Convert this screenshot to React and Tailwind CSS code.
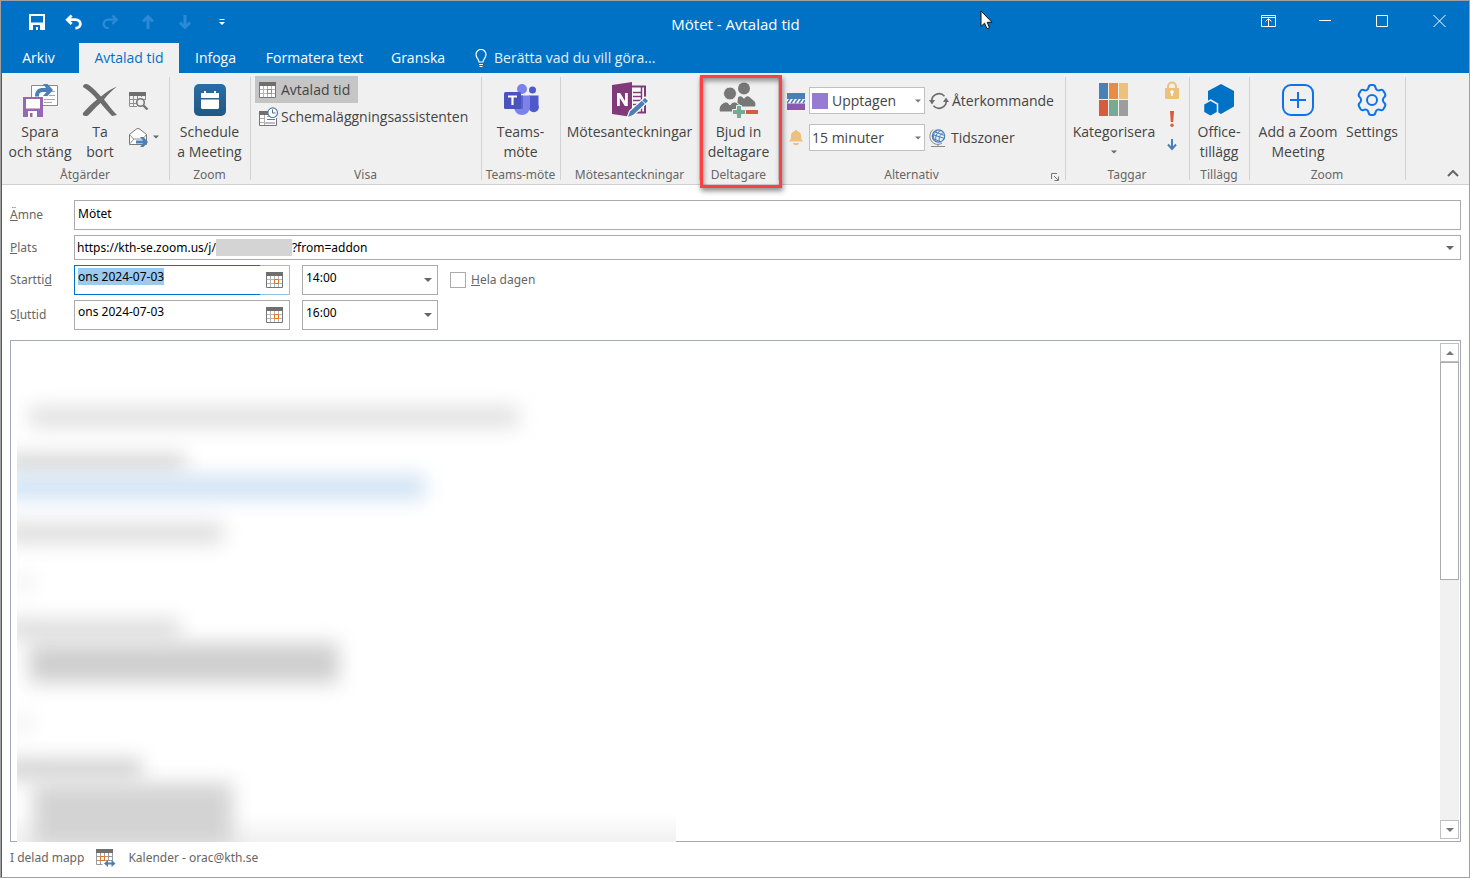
import React, { useState } from "react";

const CaretDown = ({ className = "" }) => (
  <svg width="8" height="4" viewBox="0 0 8 4" className={className}>
    <path d="M0 0h8L4 4z" fill="currentColor" />
  </svg>
);

const CalendarIcon = () => (
  <svg width="18" height="18" viewBox="0 0 18 18" fill="none">
    <path d="M0 4h17v13H0z" fill="#fff" />
    <path d="M1 8.500h15M1 12.500h15M4.500 5v11M8.500 5v11M12.500 5v11" stroke="#b5b5b5" />
    <path d="M.5 4v12.500h16V4" stroke="#777" />
    <path d="M0 1h17v4H0z" fill="#6f6f6f" />
    <path d="M8.500 8.500h4v4h-4z" fill="#fff" stroke="#e0731d" />
  </svg>
);

const SaveCloseIcon = () => (
  <svg width="36" height="36" viewBox="0 0 36 36" fill="none">
    <path d="M9.500 3.500h26v20h-26z" fill="#fff" stroke="#8a8a8a" />
    <path d="M29 9.500h4M27 13.500h6M22 17.500h11M22 20.500h8" stroke="#a6a6a6" />
    <path d="M13 14.500c0-6 3-8.500 8-8.500h3l-3-4h4.500l5.500 6-5.500 6H21l3.500-4h-3C18 10 17 11 17 14.500z" fill="#4a7fb8" />
    <path d="M1 15h20v20H1z" fill="#9567b5" />
    <path d="M4 17h14v9.500H4z" fill="#fff" />
    <path d="M6 29h9v6H6z" fill="#fff" />
    <path d="M8 31h2.500v4H8z" fill="#9567b5" />
  </svg>
);

const DeleteIcon = () => (
  <svg width="36" height="34" viewBox="0 0 36 34">
    <path
      d="M1 4C1 1 4 0 7 2c5 3.500 8 7.500 12 11.500C24 9 29 6 35 3.500c-5 4-9.500 8-13 13C26 21.500 30 27 35 32l-5 1c-4-4-8-9-11.500-13C14 24 10 28.500 6 32.500c-3 1.500-6 0-5-2.500 4.500-5.500 9-9.500 14-13.500C11 11.500 6 7 1 4z"
      fill="#6d6d6d"
    />
  </svg>
);

const CalendarSearchIcon = () => (
  <svg width="20" height="20" viewBox="0 0 20 20" fill="none">
    <path d="M.5 5v11.500H8M1 9.500h16M1 13.500h7M4.500 5v11M8.500 5v11M12.500 5v2M16.500 5v5" stroke="#8f8f8f" />
    <path d="M0 2h17v4H0z" fill="#6f6f6f" />
    <circle cx="11.500" cy="12.500" r="3.800" fill="#f0f0f0" stroke="#777" strokeWidth="1.600" />
    <path d="M14.500 15.500l4 4" stroke="#777" strokeWidth="2.400" />
  </svg>
);

const ForwardIcon = () => (
  <svg width="20" height="20" viewBox="0 0 20 20" fill="none">
    <path d="M.5 7.500L7 2.300c1.300-1 2.700-1 4 0l6.500 5.200v10H.5z" fill="#fff" stroke="#777" />
    <path d="M.5 7.500l4 4.500h9l4-4.500M.5 17L5 12" stroke="#8f8f8f" />
    <path d="M7 13.500h7l-3-3.500h3.500l4.500 5-4.500 5H11l3-3.500H7z" fill="#4a7fb8" />
  </svg>
);

const ZoomCalendarIcon = () => (
  <svg width="32" height="32" viewBox="0 0 32 32">
    <defs>
      <linearGradient id="zoomBlue" x1="0" y1="0" x2="0" y2="1">
        <stop offset="0" stopColor="#2b6da5" />
        <stop offset="1" stopColor="#205882" />
      </linearGradient>
    </defs>
    <rect width="32" height="32" rx="5" fill="url(#zoomBlue)" />
    <path d="M7 9h3V7h2v2h8V7h2v2h3v5H7zM7 15.500h18v8q0 1.500-1.500 1.500h-15Q7 25 7 23.500z" fill="#fff" />
  </svg>
);

const SchedulingIcon = () => (
  <svg width="20" height="20" viewBox="0 0 20 20" fill="none">
    <path d="M.5 5v13.500h17V11" fill="#fff" stroke="#777" />
    <path d="M0 4h9v4H0z" fill="#6f6f6f" />
    <path d="M1 11.500h5M1 15.500h4M5.500 8v10M8 9.500h3" stroke="#b0b0b0" />
    <path d="M8 12.500h8" stroke="#4a7fb8" />
    <path d="M6 16h10" stroke="#9567b5" />
    <circle cx="13.700" cy="5.700" r="4.800" fill="#fff" stroke="#4a7fb8" strokeWidth="1.200" />
    <path d="M13.500 2.500v3.500h3" stroke="#666" />
  </svg>
);

const TeamsIcon = () => (
  <svg width="36" height="34" viewBox="0 0 36 34">
    <circle cx="29.500" cy="7" r="3.500" fill="#5059c9" />
    <path d="M26 12.500h9.500V22a5 5 0 0 1-9.500 4z" fill="#5059c9" />
    <circle cx="19" cy="6" r="5" fill="#7b83eb" />
    <path d="M11 12.500h16V24a8 8 0 0 1-16 0z" fill="#7b83eb" />
    <path d="M11 12.500h9V26h-9z" fill="#5b63cf" />
    <rect x="1" y="9" width="17" height="17" rx="1.500" fill="#4b53bc" />
    <path d="M5 12.500h9v2h-3.400V22H8.400v-7.500H5z" fill="#fff" />
  </svg>
);

const OneNoteIcon = () => (
  <svg width="38" height="38" viewBox="0 0 38 38" fill="none">
    <path d="M20 5.500h14v26H20z" fill="#fff" stroke="#80397b" strokeWidth="2" />
    <path d="M22 11.500h9M22 15.500h9M22 19.500h9M22 23.500h9M30.500 5v26" stroke="#80397b" strokeWidth="1.500" />
    <path d="M1 4l20-3v35L1 33z" fill="#80397b" />
    <path d="M6 25V12h3.200l4.800 8v-8h2.800v13h-3L8.800 17v8z" fill="#fff" />
    <path d="M34 16l4 4-15 14-7 3 2.500-7z" fill="#4a7fb8" stroke="#fff" strokeWidth="1.200" />
    <path d="M30.500 19l4 4" stroke="#fff" />
  </svg>
);

const AttendeesIcon = () => (
  <svg width="40" height="38" viewBox="0 0 40 38">
    <g fill="#777">
      <circle cx="25" cy="7.500" r="6" />
      <path d="M19 16.500c2-2 4-1.500 6 1.500 2-3 4-3.500 6-1.500l3.500 3c2 2 2.500 3 1.500 6H18z" />
    </g>
    <g fill="#777" stroke="#f0f0f0">
      <circle cx="11" cy="12.500" r="6.500" />
      <path d="M4 22c3-2 5-1 7 2 2-3 5-4 7-2l4 3v6H.500c-1-4 0-6.500 3.500-9z" />
    </g>
    <path d="M17.500 24.500h5v4h4v5h-4v4h-5v-4h-4v-5h4z" fill="#75aa95" stroke="#f0f0f0" />
    <path d="M27 29h12v4H27z" fill="#d65c3f" />
  </svg>
);

const ShowAsIcon = () => (
  <svg width="18" height="18" viewBox="0 0 18 18">
    <path d="M0 1h18v6H0z" fill="#4a7fb8" />
    <path d="M0 7h18v4H0z" fill="#fff" />
    <path d="M0 11.500h18V18H0z" fill="#8a58ad" />
    <path d="M0 11l3-4M4 11l3-4M8 11l3-4M12 11l3-4M16 11l2-3" stroke="#4a7fb8" strokeWidth="1.600" />
  </svg>
);

const BellIcon = () => (
  <svg width="16" height="18" viewBox="0 0 16 18" fill="#ebc17c">
    <path d="M7 1h2v1c3 .500 4 2.500 4 5 0 3 .500 4 2.500 5.500H.500C2.500 11 3 10 3 7c0-2.500 1-4.500 4-5z" />
    <path d="M5 14h6c0 3-6 3-6 0z" />
  </svg>
);

const RecurrenceIcon = () => (
  <svg width="20" height="18" viewBox="0 0 20 18" fill="none">
    <path d="M3 10.500A7.200 7.200 0 0 1 15.500 4.300M17 7.500A7.200 7.200 0 0 1 4.500 13.700" stroke="#6d6d6d" strokeWidth="1.600" />
    <path d="M0 8h6l-3 4.500zM14 10h6l-3-4.500z" fill="#6d6d6d" />
  </svg>
);

const GlobeIcon = () => (
  <svg width="18" height="20" viewBox="0 0 18 20" fill="none">
    <circle cx="9.500" cy="8" r="6.200" fill="#e4eef7" stroke="#4a7fb8" strokeWidth="1.200" />
    <path d="M3.500 6.500l12 4M5 3.500l10.500 4M4 10.500l8 3.500M12 2.500c-5 2-6 7-5 11.500M14.500 4.500c-4 2-5 6-4 9.500M8 2.500C4.500 5 4 8 5 12" stroke="#4a7fb8" />
    <path d="M4 1.500c-4.500 4-4 11 1 14 3 1.500 6 1 8-.5M9 16v2M2 18.500h14" stroke="#8a8a8a" />
  </svg>
);

const CategorizeIcon = () => (
  <svg width="30" height="34" viewBox="0 0 30 34">
    <path d="M0 0h9v16H0z" fill="#4a7fb8" />
    <path d="M10 0h9v16h-9z" fill="#e88c42" />
    <path d="M20 0h9v16h-9z" fill="#ebc17c" />
    <path d="M0 17h9v16H0z" fill="#d65c3f" />
    <path d="M10 17h9v16h-9z" fill="#75aa95" />
    <path d="M20 17h9v16h-9z" fill="#9d9d9d" />
  </svg>
);

const LockIcon = () => (
  <svg width="14" height="18" viewBox="0 0 14 18">
    <path d="M3 8V5.500a4 4 0 0 1 8 0V8" fill="none" stroke="#ebc17c" strokeWidth="2" />
    <rect y="7" width="14" height="11" rx="1" fill="#ebc17c" />
    <circle cx="7" cy="11" r="1.800" fill="#fff" />
    <path d="M6.200 11h1.600v4H6.200z" fill="#fff" />
  </svg>
);

const ImportanceHighIcon = () => (
  <svg width="6" height="16" viewBox="0 0 6 16" fill="#d65c3f">
    <path d="M1 0h4l-.800 11H1.800z" />
    <circle cx="3" cy="14.200" r="1.700" />
  </svg>
);

const ImportanceLowIcon = () => (
  <svg width="10" height="12" viewBox="0 0 10 12">
    <path d="M5 0v10M1 5.500l4 4.500 4-4.500" fill="none" stroke="#4a7fb8" strokeWidth="2" />
  </svg>
);

const AddInsIcon = () => (
  <svg width="32" height="32" viewBox="0 0 32 32" fill="#0072c6">
    <path d="M18 0l13 7v15.500L18 30 5 22.500V7z" />
    <path d="M7.500 16l7 4v8.500l-7 4-7-4V20z" stroke="#f0f0f0" strokeWidth="1.500" />
  </svg>
);

const AddZoomIcon = () => (
  <svg width="32" height="32" viewBox="0 0 32 32" fill="none" stroke="#0e72ed" strokeWidth="2">
    <rect x="1" y="1" width="30" height="30" rx="8" />
    <path d="M16 8v16M8 16h16" />
  </svg>
);

const SettingsIcon = () => (
  <svg width="32" height="32" viewBox="0 0 32 32" fill="none" stroke="#0e72ed" strokeWidth="2" strokeLinejoin="round">
    <path d="M12.500 3.500Q13 1 15 1h2q2 0 2.500 2.500c.500 2.500 2.500 3.500 5 2.500q2-.700 3 1l1.500 2.700q1 1.800-.600 3.300c-2 1.700-2 4.300 0 6q1.600 1.500.600 3.300L27.500 25q-1 1.700-3 1c-2.500-1-4.500 0-5 2.500Q19 31 17 31h-2q-2 0-2.500-2.500c-.500-2.500-2.500-3.500-5-2.500q-2 .700-3-1L3 22.300q-1-1.800.600-3.300c2-1.700 2-4.300 0-6Q2 11.500 3 9.700L4.500 7q1-1.700 3-1c2.500 1 4.500 0 5-2.500z" />
    <circle cx="16" cy="16" r="5" />
  </svg>
);

const SharedCalendarIcon = () => (
  <svg width="20" height="19" viewBox="0 0 20 19" fill="none">
    <path d="M.5 4v12.500h6M1 8.500h16M1 12.500h16M4.500 4v12M8.500 4v8M12.500 4v8M16.500 4v8" stroke="#9a9a9a" />
    <path d="M0 1h17v4H0z" fill="#6f6f6f" />
    <path d="M4.500 8.500h4v4h-4z" fill="#fff" stroke="#e0731d" />
    <path d="M8 15.500l4-3.500v2.500h3.500V12l4 3.500-4 3.500v-2.500H12V19z" fill="#4a7fb8" />
  </svg>
);

const LargeButton = ({ icon, lines, className = "", caret = false }) => (
  <button className={`flex shrink-0 flex-col items-center text-sm leading-5 whitespace-nowrap text-[#444] ${className}`}>
    <span className="flex h-11 items-center justify-center">{icon}</span>
    {lines.map((line) => (
      <span key={line}>{line}</span>
    ))}
    {caret && <CaretDown className="mt-2 w-1.5 text-[#666]" />}
  </button>
);

const RibbonGroup = ({ label, className = "", labelClassName = "", children, launcher = false }) => (
  <section className={`relative flex shrink-0 flex-col pt-[5px] pr-0.5 ${className}`}>
    <div className="flex flex-1">{children}</div>
    <h2 className={`h-[19px] text-center font-['Noto_Sans'] text-xs leading-[19px] whitespace-nowrap text-[#666] ${labelClassName}`}>
      {label}
    </h2>
    {launcher && (
      <button aria-label="Visa alternativ" className="absolute right-1 bottom-0 p-0.5 text-[#777]">
        <svg width="9" height="9" viewBox="0 0 9 9" fill="none" stroke="currentColor">
          <path d="M.500 6V.500H6M3 3l4 4M7.500 3.500v4h-4" />
        </svg>
      </button>
    )}
    <div className="absolute top-1 right-0 bottom-1 w-px bg-[#d2d2d2]" />
  </section>
);

const quickActions = [
  { name: "Spara", icon: <svg width="16" height="16" viewBox="0 0 16 16"><path d="M1 1h14v14H1zM1 9.500h14" fill="none" stroke="#fff" strokeWidth="2" /><path d="M2 10h12v5H2z" fill="#fff" /><path d="M4 11h7v5H9v-3H7v3H4z" fill="#0072c6" /></svg> },
  { name: "Ångra", icon: <svg width="18" height="16" viewBox="0 0 18 16" fill="none" stroke="#fff" strokeWidth="3"><path d="M7 1L2.500 5.500 7 10M3 5.500h8c7 0 7 9 0 9" /></svg> },
  { name: "Gör om", icon: <svg width="18" height="16" viewBox="0 0 18 16" fill="none" stroke="#2b8ad6" strokeWidth="2.500"><path d="M11 1l4.500 4.500L11 10M15 5.500H7c-7 0-7 9 0 9" /></svg> },
  { name: "Föregående", icon: <svg width="12" height="16" viewBox="0 0 12 16" fill="none" stroke="#2b8ad6" strokeWidth="3"><path d="M6 15V3M1 7.500l5-5 5 5" /></svg> },
  { name: "Nästa", icon: <svg width="12" height="16" viewBox="0 0 12 16" fill="none" stroke="#2b8ad6" strokeWidth="3"><path d="M6 1v12M1 8.500l5 5 5-5" /></svg> },
  { name: "Anpassa", icon: <svg width="6" height="6" viewBox="0 0 6 6" fill="#fff"><path d="M.500 0h5v1h-5zM0 3h6L3 6z" /></svg> },
];

const windowControls = [
  { name: "Menyfliksområde", path: "M.5 1.500h14v11H.500zM.500 3.500h14M7.500 12V5M4.500 7.500l3-3 3 3" },
  { name: "Minimera", path: "M1 6.500h12" },
  { name: "Maximera", path: "M1.500 1.500h11v11h-11z" },
  { name: "Stäng", path: "M1.500 1l12 12M13.500 1l-12 12" },
];

// Hidden message text, one smudge for each line
const smudges = [
  "ml-3 mt-[66px] h-5 w-[490px] bg-[#dfdfdf]",
  "-ml-3 mt-7 h-4 w-[180px] bg-[#d0d0d0]",
  "-ml-3 mt-1 h-6 w-[420px] bg-[#cfe2f4]",
  "-ml-3 mt-6 h-5 w-[218px] bg-[#dcdcdc]",
  "-ml-3 mt-8 h-4 w-8 bg-[#f4f4f4]",
  "-ml-3 mt-7 h-5 w-[175px] bg-[#dcdcdc]",
  "ml-3 mt-1 h-10 w-[310px] bg-[#cfcfcf]",
  "-ml-3 mt-8 h-4 w-8 bg-[#f4f4f4]",
  "-ml-3 mt-7 h-5 w-[137px] bg-[#d0d0d0]",
  "ml-4 mt-1 h-16 w-[200px] bg-[#d3d3d3]",
];

const TitleBar = () => (
  <div className="grid h-[42px] grid-cols-[1fr_auto_1fr] items-center">
    <div className="flex items-center gap-5 pl-[26px]">
      {quickActions.map((action) => (
        <button key={action.name} aria-label={action.name} className="flex w-[17px] justify-center">
          {action.icon}
        </button>
      ))}
    </div>
    <h1 className="pt-1 text-[15px] leading-5">Mötet - Avtalad tid</h1>
    <div className="flex justify-end gap-[42px] pr-[22px] pb-0.5">
      {windowControls.map((control) => (
        <button key={control.name} aria-label={control.name}>
          <svg width="15" height="14" viewBox="0 0 15 14" fill="none" stroke="#fff">
            <path d={control.path} />
          </svg>
        </button>
      ))}
    </div>
  </div>
);

const Tabs = () => (
  <nav className="flex h-[30px] items-stretch text-sm leading-5 whitespace-nowrap">
    <button className="w-[77px] pr-1">Arkiv</button>
    <button className="w-[100px] bg-[#f0f0f0] text-[#0072c6]">Avtalad tid</button>
    <button className="w-[73px]">Infoga</button>
    <button className="w-[125px]">Formatera text</button>
    <button className="w-[82px]">Granska</button>
    <label className="flex items-center gap-[7px] pl-4">
      <svg width="12" height="18" viewBox="0 0 12 18" fill="none" stroke="#fff">
        <path d="M4 13c0-3-3-4-3-7.500a5 5 0 0 1 10 0C11 9 8 10 8 13zM4 15.500h4M4.500 17.500h3" strokeWidth="1.200" />
      </svg>
      <input aria-label="Berätta" placeholder="Berätta vad du vill göra..." className="w-48 placeholder:text-[#e3f0fa] outline-none" />
    </label>
  </nav>
);

const Ribbon = () => (
  <div className="flex h-28 border-b border-[#d0d0d0] bg-[#f0f0f0]">
    <RibbonGroup label="Åtgärder" className="w-[168px]">
      <LargeButton icon={<SaveCloseIcon />} lines={["Spara", "och stäng"]} className="w-[76px]" />
      <LargeButton icon={<DeleteIcon />} lines={["Ta", "bort"]} className="w-11" />
      <div className="flex flex-col gap-[17px] pt-3 pl-[7px]">
        <button aria-label="Kalender">
          <CalendarSearchIcon />
        </button>
        <button aria-label="Vidarebefordra" className="flex items-center gap-1">
          <ForwardIcon />
          <CaretDown className="w-1.5 text-[#666]" />
        </button>
      </div>
    </RibbonGroup>
    <RibbonGroup label="Zoom" className="w-[81px]">
      <LargeButton icon={<ZoomCalendarIcon />} lines={["Schedule", "a Meeting"]} className="w-full" />
    </RibbonGroup>
    <RibbonGroup label="Visa" className="w-[231px]">
      <div className="-mt-0.5 flex flex-col items-start pl-1 text-sm text-[#444]">
        <button className="flex h-[27px] items-center gap-1 bg-[#c5c5c5] pr-2 pl-1">
          <CalendarIcon />
          Avtalad tid
        </button>
        <button className="flex h-[27px] items-center gap-0.5 pl-1 whitespace-nowrap">
          <SchedulingIcon />
          Schemaläggningsassistenten
        </button>
      </div>
    </RibbonGroup>
    <RibbonGroup label="Teams-möte" className="w-[79px]">
      <LargeButton icon={<TeamsIcon />} lines={["Teams-", "möte"]} className="w-full" />
    </RibbonGroup>
    <RibbonGroup label="Mötesanteckningar" className="w-[139px]">
      <LargeButton icon={<OneNoteIcon />} lines={["Mötesanteckningar"]} className="w-full" />
    </RibbonGroup>
    <div className="relative flex">
      <RibbonGroup label="Deltagare" className="w-[79px]">
        <LargeButton icon={<AttendeesIcon />} lines={["Bjud in", "deltagare"]} className="w-full" />
      </RibbonGroup>
      <div className="pointer-events-none absolute top-0.5 -right-[3px] -bottom-1 left-0 z-10 border-3 border-[#fb4141] shadow-[1px_3px_5px_rgba(0,0,0,0.45),inset_1px_3px_5px_rgba(0,0,0,0.4)]" />
    </div>
    <RibbonGroup label="Alternativ" className="w-[287px]" labelClassName="pr-5" launcher>
      <div className="grid grid-cols-[22px_116px_auto] content-start items-center gap-x-1 gap-y-2.5 pt-[9px] pl-1 text-sm text-[#444]">
        <span className="flex justify-center pl-1"><ShowAsIcon /></span>
        <label className="relative flex items-center">
          <span className="absolute left-[3px] size-4 bg-[#977bd2]" />
          <select aria-label="Visa som" className="h-[27px] w-full appearance-none border border-[#c0c0c0] bg-white pl-[22px]">
            <option>Upptagen</option>
          </select>
          <CaretDown className="absolute right-1 w-1.5 text-[#777]" />
        </label>
        <button className="flex items-center gap-[3px] whitespace-nowrap"><RecurrenceIcon />Återkommande</button>
        <span className="flex justify-center pl-1"><BellIcon /></span>
        <label className="relative flex items-center">
          <select aria-label="Påminnelse" className="h-[27px] w-full appearance-none border border-[#c0c0c0] bg-white pl-0.5">
            <option>15 minuter</option>
          </select>
          <CaretDown className="absolute right-1 w-1.5 text-[#777]" />
        </label>
        <button className="flex items-center gap-1"><GlobeIcon />Tidszoner</button>
      </div>
    </RibbonGroup>
    <RibbonGroup label="Taggar" className="w-[124px]">
      <LargeButton icon={<CategorizeIcon />} lines={["Kategorisera"]} className="w-24" caret />
      <div className="flex flex-col items-center gap-3 pt-[3px] pl-[3px]">
        <button aria-label="Privat"><LockIcon /></button>
        <button aria-label="Hög prioritet"><ImportanceHighIcon /></button>
        <button aria-label="Låg prioritet"><ImportanceLowIcon /></button>
      </div>
    </RibbonGroup>
    <RibbonGroup label="Tillägg" className="w-[60px]">
      <LargeButton icon={<AddInsIcon />} lines={["Office-", "tillägg"]} className="w-full" />
    </RibbonGroup>
    <RibbonGroup label="Zoom" className="w-[156px]">
      <LargeButton icon={<AddZoomIcon />} lines={["Add a Zoom", "Meeting"]} className="w-24" />
      <LargeButton icon={<SettingsIcon />} lines={["Settings"]} className="w-[52px]" />
    </RibbonGroup>
    <button aria-label="Dölj menyfliksområdet" className="mt-auto ml-auto p-[7px] pr-2.5 text-[#666]">
      <svg width="12" height="7" viewBox="0 0 12 7" fill="none" stroke="currentColor" strokeWidth="2">
        <path d="M1 6l5-5 5 5" />
      </svg>
    </button>
  </div>
);

const DateField = ({ id, value, selected = false }) => (
  <div className="flex h-[30px] w-[216px]">
    <div className={`flex flex-1 items-start border border-r-0 pt-0.5 pl-[3px] ${selected ? "border-[#0072c6]" : "border-[#ababab]"}`}>
      <input
        id={id}
        defaultValue={value}
        className={`field-sizing-content h-[17px] text-black outline-none ${selected ? "bg-[#9bcaef]" : ""}`}
      />
    </div>
    <button
      aria-label="Välj datum"
      className={`flex w-[30px] items-center justify-center border border-l-0 ${selected ? "border-[#92c0e0]" : "border-[#ababab]"}`}
    >
      <CalendarIcon />
    </button>
  </div>
);

const TimeField = ({ label, value }) => (
  <label className="relative flex items-center">
    <select aria-label={label} className="h-[30px] w-[136px] appearance-none border border-[#ababab] pb-1 pl-[3px] text-black">
      <option>{value}</option>
    </select>
    <CaretDown className="absolute right-1.5 text-[#666]" />
  </label>
);

const AppointmentForm = () => {
  const [allDay, setAllDay] = useState(false);

  return (
    <form className="grid grid-cols-[64px_1fr] items-center gap-y-[5px] pt-[15px] pr-2 pb-2.5 pl-2 font-['Noto_Sans'] text-xs text-[#666]">
      <label htmlFor="subject"><u>Ä</u>mne</label>
      <input id="subject" defaultValue="Mötet" className="h-[30px] border border-[#ababab] pb-1 pl-[3px] text-black outline-none" />

      <label htmlFor="location"><u>P</u>lats</label>
      <div className="flex h-[25px] items-center border border-[#ababab] pl-0.5 text-black">
        <input id="location" defaultValue="https://kth-se.zoom.us/j/" className="field-sizing-content outline-none" />
        <span className="h-[17px] w-[76px] bg-[#d4d4d4]" />
        <input aria-label="Plats, fortsättning" defaultValue="?from=addon" className="flex-1 outline-none" />
        <button aria-label="Visa platser" className="px-1.5 text-[#666]"><CaretDown /></button>
      </div>

      <label htmlFor="start">Startti<u>d</u></label>
      <div className="flex items-center gap-3">
        <DateField id="start" value="ons 2024-07-03" selected />
        <TimeField label="Starttid klockslag" value="14:00" />
        <label className="flex items-center gap-[5px]">
          <input
            type="checkbox"
            checked={allDay}
            onChange={(e) => setAllDay(e.target.checked)}
            className="size-4 appearance-none border border-[#ababab] checked:bg-[#0072c6]"
          />
          <span><u>H</u>ela dagen</span>
        </label>
      </div>

      <label htmlFor="end">S<u>l</u>uttid</label>
      <div className="flex items-center gap-3">
        <DateField id="end" value="ons 2024-07-03" />
        <TimeField label="Sluttid klockslag" value="16:00" />
      </div>
    </form>
  );
};

const MessageBody = () => (
  <div className="relative mr-2 ml-2 flex min-h-0 flex-1 border border-[#a3a8b3]">
    <div className="relative -mb-px ml-1.5 flex-1 overflow-hidden">
      <div className="absolute bottom-0 left-0 h-7 w-[659px] bg-linear-to-b from-white to-[#f0f1f2]" />
      <div className="relative">
        {smudges.map((smudge, i) => (
          <div key={i} className={`blur-[10px] ${smudge}`} />
        ))}
      </div>
    </div>
    <div className="my-0.5 mr-px flex w-[19px] flex-col bg-[#f1f1f1] text-[#777]">
      <button aria-label="Rulla upp" className="flex h-[19px] items-center justify-center border border-[#c0c0c0] bg-white">
        <CaretDown className="rotate-180" />
      </button>
      <div className="h-[218px] border border-[#ababab] bg-white" />
      <button aria-label="Rulla ned" className="mt-auto flex h-[19px] items-center justify-center border border-[#c0c0c0] bg-white">
        <CaretDown />
      </button>
    </div>
  </div>
);

export default function App() {
  return (
    <div className="relative h-screen border border-[#9f9f9f] bg-white font-['Open_Sans','Noto_Sans',sans-serif]">
      <div className="flex h-full flex-col border-l border-[#0072c6]">
        <header className="bg-[#0072c6] text-white">
          <TitleBar />
          <Tabs />
        </header>
        <Ribbon />
        <AppointmentForm />
        <MessageBody />
        <footer className="flex h-[35px] items-center gap-3 pb-1 pl-2 font-['Noto_Sans'] text-xs text-[#666]">
          <span>I delad mapp</span>
          <SharedCalendarIcon />
          <span>Kalender - orac@kth.se</span>
        </footer>
      </div>
      {/* mouse pointer */}
      <svg width="13" height="20" viewBox="0 0 13 20" className="absolute top-[9px] left-[979px]">
        <path d="M1 1v15.500l3.500-3.300 2.500 5.500 2.500-1-2.300-5.400H12z" fill="#fff" stroke="#111" />
      </svg>
    </div>
  );
}
